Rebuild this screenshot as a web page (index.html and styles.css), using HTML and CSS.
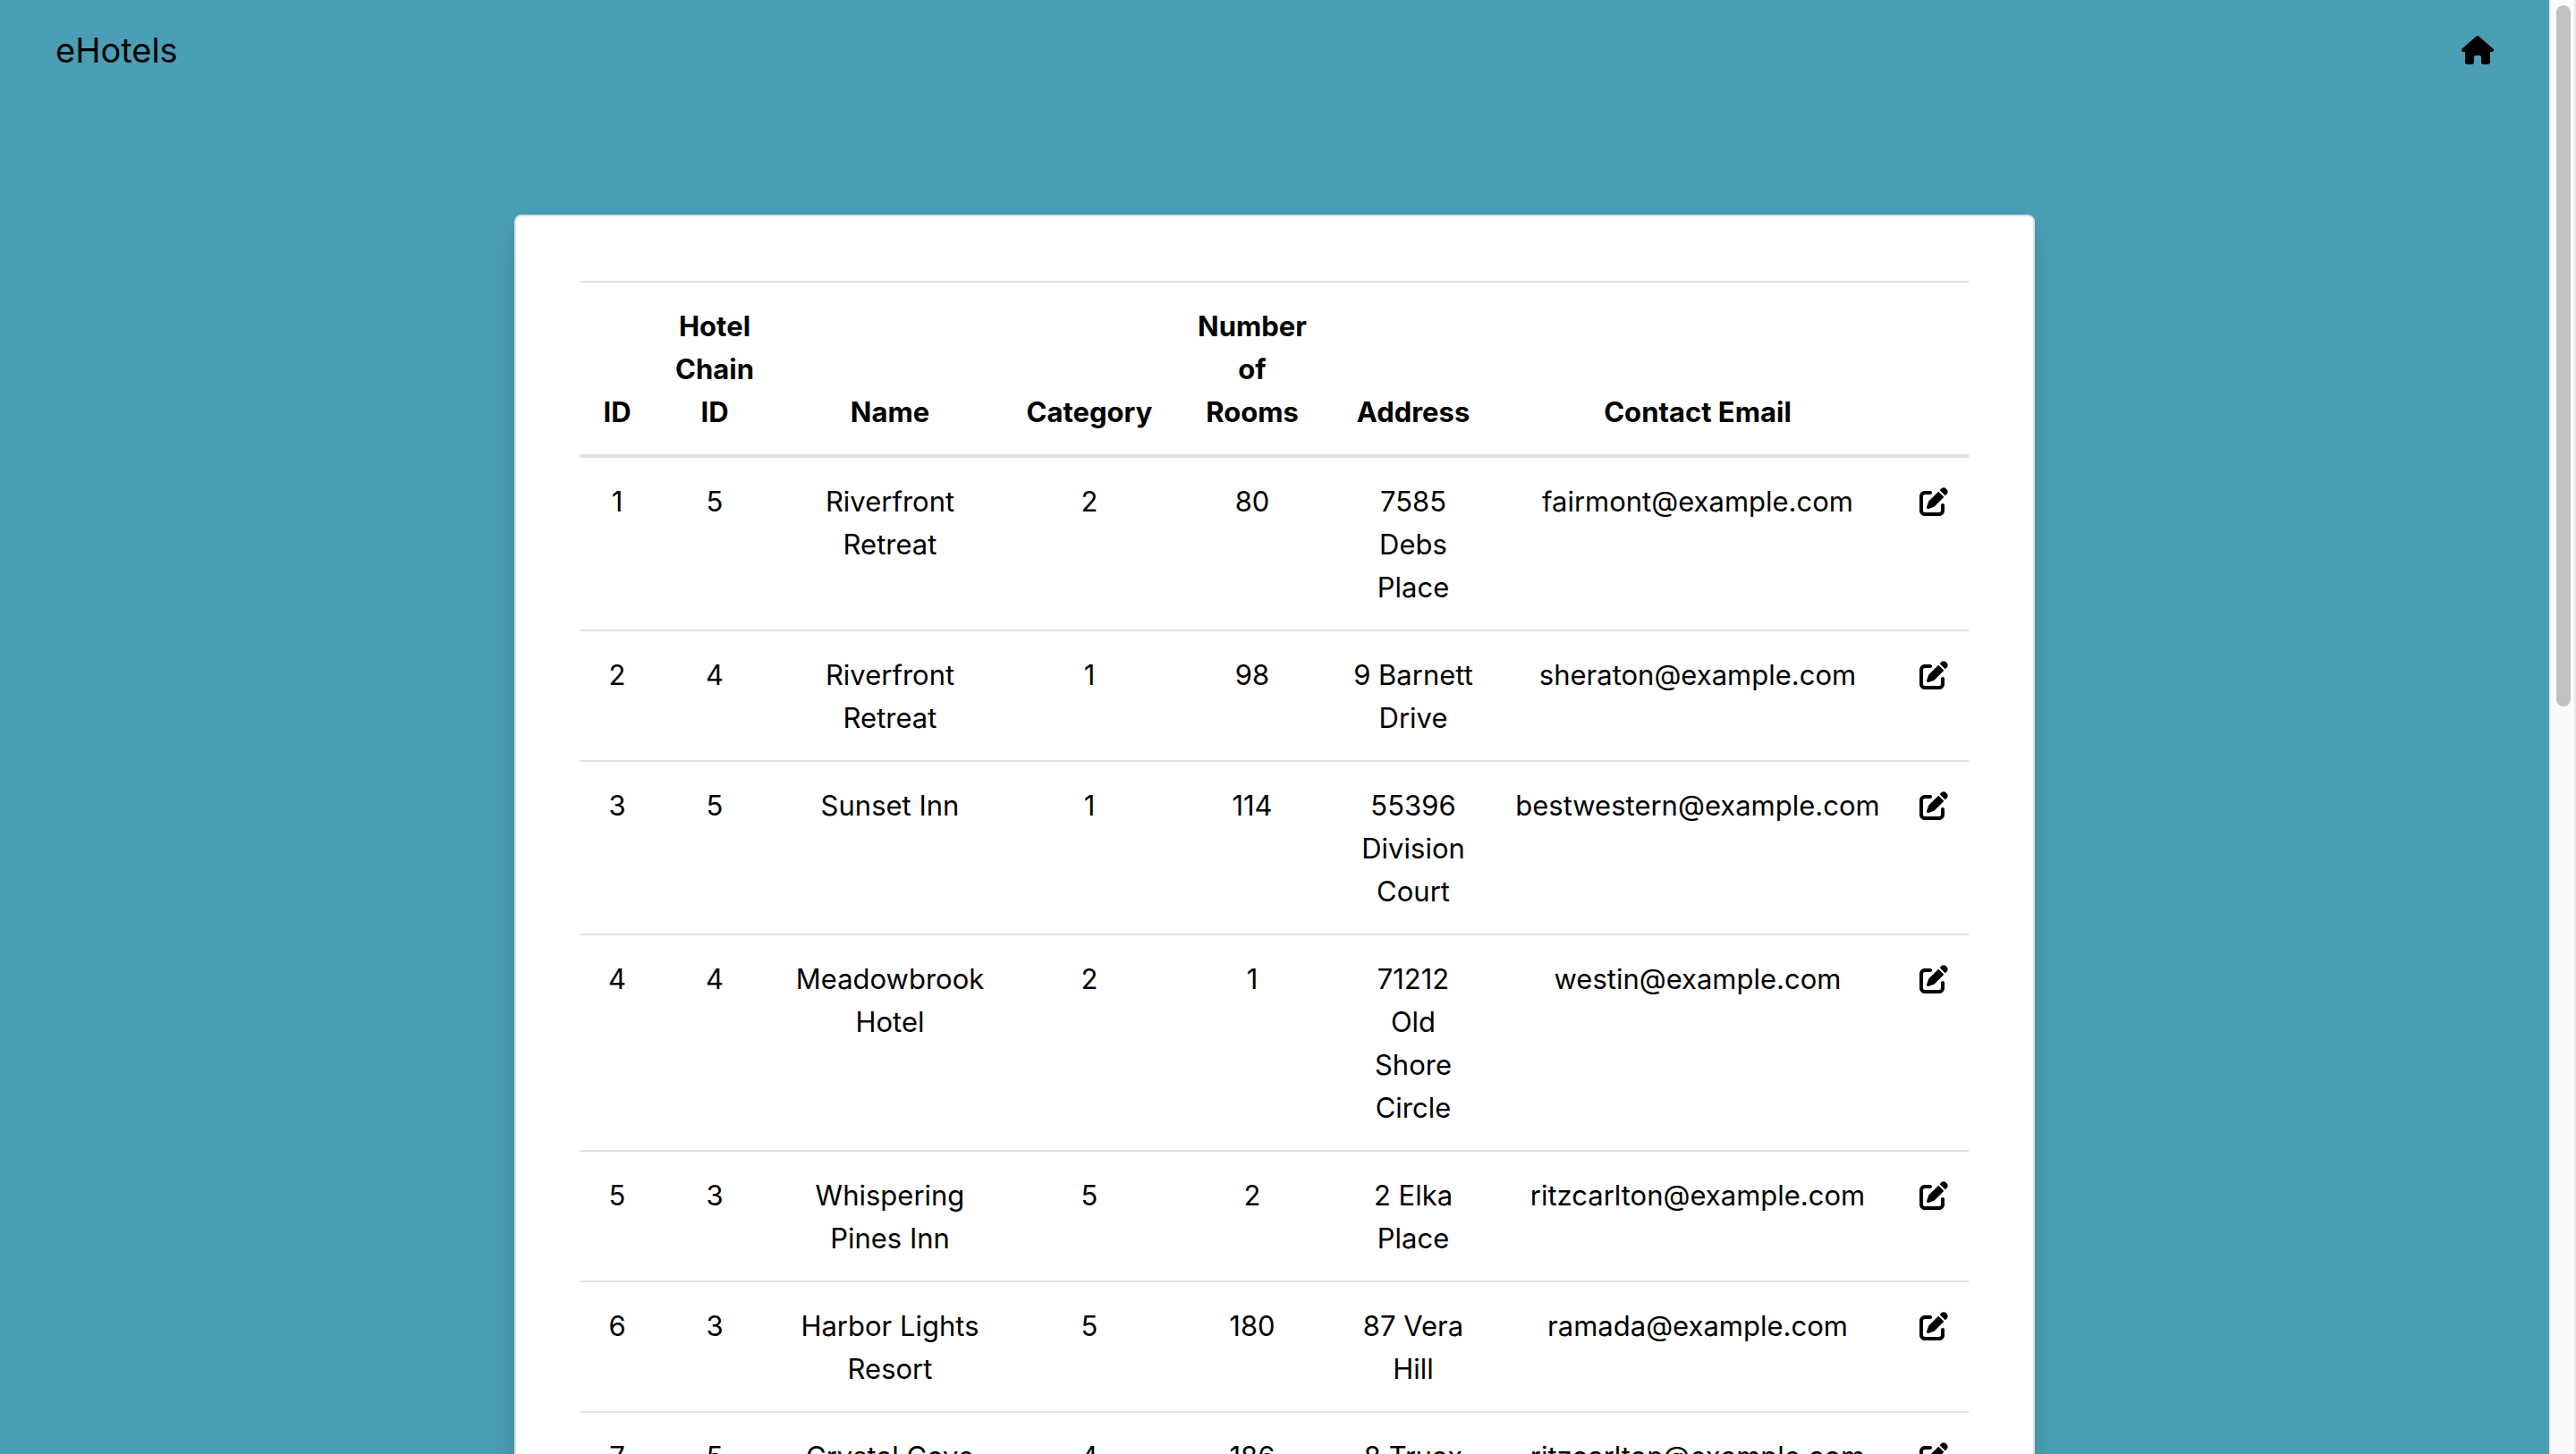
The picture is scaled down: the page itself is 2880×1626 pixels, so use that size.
FILE: index.html
```html
<!DOCTYPE html>
<html lang="en">
<head>
<meta charset="utf-8">
<meta name="viewport" content="width=device-width, initial-scale=1">
<title>eHotels</title>
<link rel="stylesheet" href="styles.css">
</head>
<body>
<svg class="sprite" aria-hidden="true">
  <symbol id="edit" viewBox="0 0 512 512"><path d="M471.6 21.7c-21.9-21.9-57.3-21.9-79.2 0L362.3 51.7l97.9 97.9 30.1-30.1c21.9-21.9 21.9-57.3 0-79.2L471.6 21.7zm-299.2 220c-6.1 6.1-10.8 13.6-13.5 21.9l-29.6 88.8c-2.9 8.6-.6 18.1 5.8 24.6s15.9 8.7 24.6 5.8l88.8-29.6c8.2-2.7 15.7-7.4 21.9-13.5L437.7 172.3 339.7 74.3 172.4 241.7zM96 64C43 64 0 107 0 160V416c0 53 43 96 96 96H352c53 0 96-43 96-96V320c0-17.7-14.3-32-32-32s-32 14.3-32 32v96c0 17.7-14.3 32-32 32H96c-17.7 0-32-14.3-32-32V160c0-17.7 14.3-32 32-32h96c17.7 0 32-14.3 32-32s-14.3-32-32-32H96z"/></symbol>
</svg>
<div class="page">
  <nav class="navbar">
    <a class="brand" href="#">eHotels</a>
    <a class="home" href="#" aria-label="Home"><svg viewBox="0 0 576 512" aria-hidden="true"><path d="M575.8 255.5c0 18-15 32.1-32 32.1h-32l.7 160.2c0 2.7-.2 5.4-.5 8.1V472c0 22.1-17.9 40-40 40H456c-1.1 0-2.2 0-3.3-.1c-1.4 .1-2.8 .1-4.2 .1H416 392c-22.1 0-40-17.9-40-40V448 384c0-17.7-14.3-32-32-32H256c-17.7 0-32 14.3-32 32v64 24c0 22.1-17.9 40-40 40H160 128.1c-1.5 0-3-.1-4.5-.2c-1.2 .1-2.4 .2-3.6 .2H104c-22.1 0-40-17.9-40-40V360c0-.9 0-1.9 .1-2.8V287.6H32c-18 0-32-14-32-32.1c0-9 3-17 10-24L266.4 8c7-7 15-8 22-8s15 2 21 7L564.8 231.5c8 7 12 15 11 24z"/></svg></a>
  </nav>
  <main class="card">
    <table class="hotels">
      <colgroup>
        <col class="c-id"><col class="c-chain"><col class="c-name"><col class="c-category"><col class="c-rooms"><col class="c-address"><col class="c-email"><col class="c-edit">
      </colgroup>
      <thead>
        <tr><th>ID</th><th>Hotel<br>Chain<br>ID</th><th>Name</th><th>Category</th><th>Number<br>of<br>Rooms</th><th>Address</th><th>Contact Email</th><th></th></tr>
      </thead>
      <tbody>
        <tr><td>1</td><td>5</td><td>Riverfront<br>Retreat</td><td>2</td><td>80</td><td>7585<br>Debs<br>Place</td><td>fairmont@example.com</td><td><a class="edit" href="#" aria-label="Edit hotel 1"><svg><use href="#edit"/></svg></a></td></tr>
        <tr><td>2</td><td>4</td><td>Riverfront<br>Retreat</td><td>1</td><td>98</td><td>9 Barnett<br>Drive</td><td>sheraton@example.com</td><td><a class="edit" href="#" aria-label="Edit hotel 2"><svg><use href="#edit"/></svg></a></td></tr>
        <tr><td>3</td><td>5</td><td>Sunset Inn</td><td>1</td><td>114</td><td>55396<br>Division<br>Court</td><td>bestwestern@example.com</td><td><a class="edit" href="#" aria-label="Edit hotel 3"><svg><use href="#edit"/></svg></a></td></tr>
        <tr><td>4</td><td>4</td><td>Meadowbrook<br>Hotel</td><td>2</td><td>1</td><td>71212<br>Old<br>Shore<br>Circle</td><td>westin@example.com</td><td><a class="edit" href="#" aria-label="Edit hotel 4"><svg><use href="#edit"/></svg></a></td></tr>
        <tr><td>5</td><td>3</td><td>Whispering<br>Pines Inn</td><td>5</td><td>2</td><td>2 Elka<br>Place</td><td>ritzcarlton@example.com</td><td><a class="edit" href="#" aria-label="Edit hotel 5"><svg><use href="#edit"/></svg></a></td></tr>
        <tr><td>6</td><td>3</td><td>Harbor Lights<br>Resort</td><td>5</td><td>180</td><td>87 Vera<br>Hill</td><td>ramada@example.com</td><td><a class="edit" href="#" aria-label="Edit hotel 6"><svg><use href="#edit"/></svg></a></td></tr>
        <tr><td>7</td><td>5</td><td>Crystal Cove</td><td>4</td><td>186</td><td>8 Truax</td><td>ritzcarlton@example.com</td><td><a class="edit" href="#" aria-label="Edit hotel 7"><svg><use href="#edit"/></svg></a></td></tr>
      </tbody>
    </table>
  </main>
</div>
<div class="scrollbar" aria-hidden="true"><div class="thumb"></div></div>
</body>
</html>
```
FILE: styles.css
```css
* { box-sizing: border-box; }

body {
  display: flex;
  height: 100vh;
  margin: 0;
  overflow: hidden;
  background: #4a9fb5;
  color: #000;
  font: 400 31px/48px Inter, "Liberation Sans", sans-serif;
}

a { color: inherit; text-decoration: none; }

.sprite { display: none; }

.page { flex: 1; min-width: 0; overflow: hidden; }

.navbar {
  display: flex;
  align-items: center;
  justify-content: space-between;
  height: 112px;
  padding: 0 62px;
}

.brand { font-size: 38px; line-height: 60px; }

.home svg { display: block; width: 36px; height: 32px; }

.card {
  max-width: 1700px;
  margin: 128px auto 0;
  padding: 72px;
  background: #fff;
  border: 2px solid #dfdfdf;
  border-radius: 8px;
  box-shadow: 0 16px 32px rgba(0, 0, 0, .15);
}

.hotels {
  width: 100%;
  table-layout: fixed;
  border-collapse: separate;
  border-spacing: 0;
  text-align: center;
}

.c-id { width: 82px; }
.c-chain { width: 136px; }
.c-name { width: 256px; }
.c-category { width: 190px; }
.c-rooms { width: 174px; }
.c-address { width: 186px; }
.c-email { width: 450px; }
.c-edit { width: 78px; }

th, td {
  padding: 25px 0 23px;
  border-top: 2px solid #dee2e6;
  white-space: nowrap;
  vertical-align: top;
}

th {
  font-weight: 700;
  border-bottom: 4px solid #dee2e6;
  vertical-align: bottom;
}

tbody tr:first-child td { border-top: 0; }

.edit {
  display: flex;
  align-items: center;
  justify-content: center;
  height: 48px;
}

.edit svg { width: 32px; height: 32px; }

.scrollbar {
  width: 30px;
  padding: 6px;
  background: #fafafa;
  border: solid #e8e8e8;
  border-width: 0 2px;
}

.thumb {
  width: 16px;
  height: 48.6%;
  background: #c1c1c1;
  border-radius: 8px;
}
```
